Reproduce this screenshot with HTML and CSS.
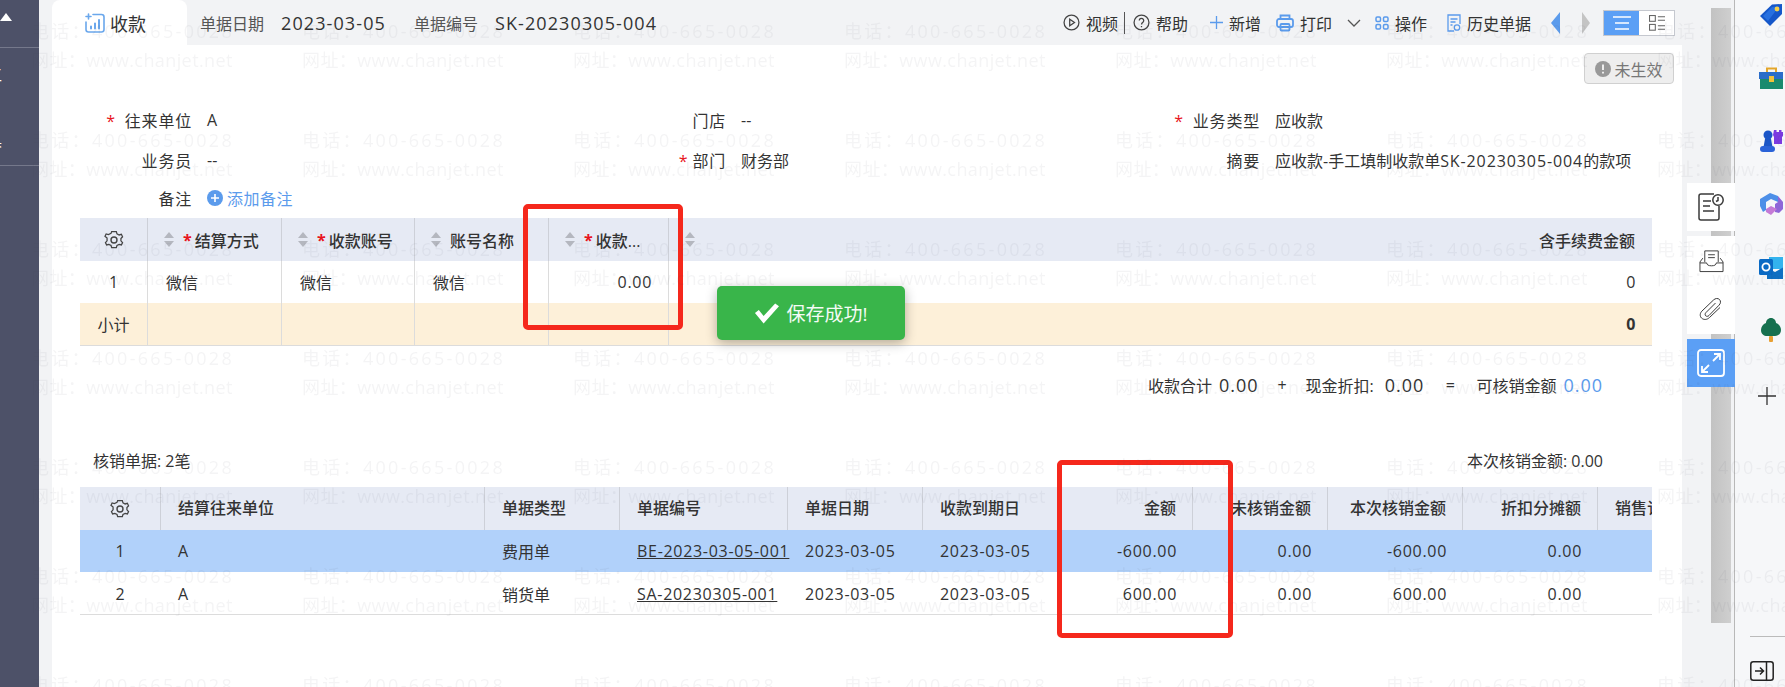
FILE: index.html
```html
<!DOCTYPE html>
<html lang="zh-CN">
<head>
    <meta charset="UTF-8">
    <title>收款</title>
    <link rel="stylesheet" href="styles.css">
</head>
<body>
    <aside class="sidebar">
        <div class="side-top"><span class="side-arrow"></span></div>
        <div class="side-menu">
            <span class="side-clip">工</span>
            <span class="side-clip">具</span>
        </div>
    </aside>

    <div class="work">
        <header class="topbar">
            <div class="tab">
                <svg class="tab-icon" viewBox="0 0 20 20" fill="none" stroke="#6aa7ec" stroke-width="1.6" stroke-linecap="round">
                    <path d="M8 1.5h8.5a2.5 2.5 0 0 1 2.5 2.5v12.5a2.5 2.5 0 0 1-2.5 2.5h-13A2.5 2.5 0 0 1 1 16.500V9"/>
                    <path d="M3.500 1v5M1 3.500h5"/>
                    <path d="M6 15.500v-2M10 15.500v-5M14 15.500V7" stroke-width="2"/>
                </svg>
                <span>收款</span>
            </div>
            <span class="head-label head-first">单据日期</span>
            <span class="head-value">2023-03-05</span>
            <span class="head-label head-second">单据编号</span>
            <span class="head-value">SK-20230305-004</span>

            <nav class="tools">
                <span class="tool">
                    <svg class="ico" viewBox="0 0 16 16" fill="none" stroke="#444" stroke-width="1.200"><circle cx="8" cy="8" r="7"/><path d="M6.300 5v6l4.500-3z"/></svg>视频
                </span>
                <span class="tool-sep"></span>
                <span class="tool tool-help">
                    <svg class="ico" viewBox="0 0 16 16" fill="none" stroke="#444" stroke-width="1.200"><circle cx="8" cy="8" r="7"/><path d="M5.900 6.200a2.100 2.100 0 1 1 3.300 1.700c-.8.5-1.200 1-1.200 1.900M8 11.300v1.100"/></svg>帮助
                </span>
                <span class="tool tool-new">
                    <svg class="ico ico-plus" viewBox="0 0 14 14" fill="none" stroke="#5b9bec" stroke-width="1.400"><path d="M7 0v14M0 7h14"/></svg>新增
                </span>
                <span class="tool">
                    <svg class="ico ico-print" viewBox="0 0 18 18" fill="none" stroke="#5b9bec" stroke-width="1.800"><path d="M4.500 5V1.500h9V5"/><rect x="1" y="5" width="16" height="8" rx="2"/><rect x="4.500" y="10" width="9" height="6.500" rx="1"/></svg>打印
                </span>
                <svg class="chevron" viewBox="0 0 14 8" fill="none" stroke="#555" stroke-width="1.300"><path d="M1 1l6 6 6-6"/></svg>
                <span class="tool">
                    <svg class="ico ico-ops" viewBox="0 0 14 14" fill="none" stroke="#5b9bec" stroke-width="1.500"><rect x="1" y="1" width="4.500" height="4.500" rx="1.200"/><rect x="8.500" y="1" width="4.500" height="4.500" rx="1.200"/><rect x="1" y="8.500" width="4.500" height="4.500" rx="1.200"/><rect x="8.500" y="8.500" width="4.500" height="4.500" rx="1.200"/></svg>操作
                </span>
                <span class="tool tool-history">
                    <svg class="ico ico-doc" viewBox="0 0 14 18" fill="none" stroke="#5b9bec" stroke-width="1.300"><path d="M7 17H1V1h12v9"/><path d="M3.500 5h7M3.500 8h5M3.500 11h2"/><circle cx="10" cy="13.500" r="2.700"/></svg>历史单据
                </span>
                <span class="tri tri-prev"></span>
                <span class="tri tri-next"></span>
                <div class="view-toggle">
                    <span class="view-btn view-on">
                        <svg viewBox="0 0 18 14" fill="none" stroke="#fff" stroke-width="1.500"><path d="M0 1h18M2 7h14M2 13h14"/></svg>
                    </span>
                    <span class="view-btn">
                        <svg viewBox="0 0 18 18" fill="none" stroke="#666" stroke-width="1.200"><rect x=".6" y=".6" width="6.500" height="6.500"/><rect x=".6" y="10.600" width="6.500" height="6.500"/><path d="M10 2h8M10 6h8M10 12h8M10 16h8"/></svg>
                    </span>
                </div>
            </nav>
        </header>

        <main class="sheet">
            <div class="status-row">
                <span class="status">
                    <svg class="status-ico" viewBox="0 0 16 16"><circle cx="8" cy="8" r="8" fill="#999"/><path d="M8 3.500v5.500M8 10.800v1.700" stroke="#eee" stroke-width="2"/></svg>未生效
                </span>
            </div>

            <section class="form">
                <label class="f-label"><i class="star">*</i>往来单位</label><span>A</span>
                <label class="f-label">门店</label><span>--</span>
                <label class="f-label"><i class="star">*</i>业务类型</label><span>应收款</span>

                <label class="f-label">业务员</label><span>--</span>
                <label class="f-label"><i class="star star-near">*</i>部门</label><span>财务部</span>
                <label class="f-label">摘要</label><span>应收款-手工填制收款单<span class="code">SK-20230305-004</span>的款项</span>

                <label class="f-label">备注</label>
                <span class="add-note">
                    <svg class="add-ico" viewBox="0 0 16 16"><circle cx="8" cy="8" r="8" fill="#5b9bec"/><path d="M8 4v8M4 8h8" stroke="#fff" stroke-width="1.600"/></svg>添加备注
                </span>
            </section>

            <table class="grid grid-pay">
                <colgroup>
                    <col class="c68"><col class="c134"><col class="c133"><col class="c134"><col class="c120"><col>
                </colgroup>
                <thead>
                    <tr>
                        <th class="center">
                            <svg class="gear" viewBox="0 0 20 20" fill="none" stroke="#444" stroke-width="1.400"><path d="M7.400 1.500h5.200l.7 2.500 2.400 1.300 2.500-.7 1.300 2.700-1.800 1.900v2.600l1.800 1.900-1.300 2.700-2.500-.7-2.400 1.300-.7 2.300H7.400l-.7-2.300-2.400-1.300-2.500.7-1.300-2.700 1.800-1.900V8.700L0 6.800l1.300-2.700 2.500.7L6.700 3.500z" transform="translate(1 .2) scale(.9)"/><circle cx="10" cy="10" r="3"/></svg>
                        </th>
                        <th><div class="th-in"><span class="sort"></span><i class="req">*</i>结算方式</div></th>
                        <th><div class="th-in"><span class="sort"></span><i class="req">*</i>收款账号</div></th>
                        <th><div class="th-in"><span class="sort"></span>账号名称</div></th>
                        <th><div class="th-in"><span class="sort"></span><i class="req">*</i>收款...</div></th>
                        <th><div class="th-in th-split"><span class="sort"></span>含手续费金额</div></th>
                    </tr>
                </thead>
                <tbody>
                    <tr>
                        <td class="center">1</td>
                        <td>微信</td>
                        <td>微信</td>
                        <td>微信</td>
                        <td class="right num">0.00</td>
                        <td class="right num">0</td>
                    </tr>
                    <tr class="subtotal">
                        <td class="center">小计</td>
                        <td></td>
                        <td></td>
                        <td></td>
                        <td></td>
                        <td class="right num"><b>0</b></td>
                    </tr>
                </tbody>
            </table>

            <div class="totals">
                <span>收款合计</span><span class="total-val">0.00</span>
                <span class="op">+</span>
                <span>现金折扣:</span><span class="total-val total-far">0.00</span>
                <span class="op op-wide">=</span>
                <span>可核销金额</span><span class="total-val blue">0.00</span>
            </div>

            <div class="bill-head">
                <span>核销单据: 2笔</span>
                <span>本次核销金额: 0.00</span>
            </div>

            <table class="grid grid-bill">
                <colgroup>
                    <col class="c81"><col class="c324"><col class="c135"><col class="c168"><col class="c135"><col class="c135"><col class="c135"><col class="c135"><col class="c135"><col class="c135"><col>
                </colgroup>
                <thead>
                    <tr>
                        <th class="center">
                            <svg class="gear" viewBox="0 0 20 20" fill="none" stroke="#444" stroke-width="1.400"><path d="M7.400 1.500h5.200l.7 2.500 2.400 1.300 2.500-.7 1.300 2.700-1.800 1.900v2.600l1.800 1.900-1.300 2.700-2.500-.7-2.400 1.300-.7 2.300H7.400l-.7-2.300-2.400-1.300-2.500.7-1.300-2.700 1.800-1.900V8.700L0 6.800l1.300-2.700 2.500.7L6.700 3.500z" transform="translate(1 .2) scale(.9)"/><circle cx="10" cy="10" r="3"/></svg>
                        </th>
                        <th>结算往来单位</th>
                        <th>单据类型</th>
                        <th>单据编号</th>
                        <th>单据日期</th>
                        <th>收款到期日</th>
                        <th class="right">金额</th>
                        <th class="right">未核销金额</th>
                        <th class="right">本次核销金额</th>
                        <th class="right">折扣分摊额</th>
                        <th class="clip">销售订单</th>
                    </tr>
                </thead>
                <tbody>
                    <tr class="picked">
                        <td class="center num">1</td>
                        <td>A</td>
                        <td>费用单</td>
                        <td class="num"><a class="doc-link">BE-2023-03-05-001</a></td>
                        <td class="num">2023-03-05</td>
                        <td class="num">2023-03-05</td>
                        <td class="right num">-600.00</td>
                        <td class="right num">0.00</td>
                        <td class="right num">-600.00</td>
                        <td class="right num">0.00</td>
                        <td></td>
                    </tr>
                    <tr>
                        <td class="center num">2</td>
                        <td>A</td>
                        <td>销货单</td>
                        <td class="num"><a class="doc-link">SA-20230305-001</a></td>
                        <td class="num">2023-03-05</td>
                        <td class="num">2023-03-05</td>
                        <td class="right num">600.00</td>
                        <td class="right num">0.00</td>
                        <td class="right num">600.00</td>
                        <td class="right num">0.00</td>
                        <td></td>
                    </tr>
                </tbody>
            </table>
        </main>
    </div>

    <div class="scroll"><div class="scroll-thumb"></div></div>

    <aside class="rail">
        <svg class="app" viewBox="0 0 24 24"><path d="M1 13L13 1.500 23 1v10L11 23z" fill="#1557c9"/><path d="M4 13L13 4l7-.5L9 18z" fill="#2f7bea" opacity=".7"/><circle cx="18" cy="6" r="2.400" fill="#f5d04a"/></svg>
        <svg class="app" viewBox="0 0 24 24"><path d="M8 7V2.500h9V7" fill="none" stroke="#e3a62a" stroke-width="2"/><rect y="6" width="25" height="7" fill="#2a6dc9"/><rect x="1" y="13" width="23" height="10" fill="#1a8a6e"/><rect x="10" y="10" width="5" height="6" fill="#f2c23a"/></svg>
        <svg class="app" viewBox="0 0 24 24"><path d="M15 1h2.500v2H20V1h2.500v2H25v3l-2 2v7h-8V8l-1-2z" fill="#7b3ae0"/><circle cx="9" cy="6" r="4.500" fill="#1a55c8"/><path d="M6 10h6l1.500 8H4.500z" fill="#1a55c8"/><rect x="1" y="17" width="15" height="6" rx="3" fill="#2a62d8"/></svg>
        <svg class="app" viewBox="0 0 24 24"><path d="M11 1l8 3v6l-7-3-5 3v8l-3 2-3-6V7z" fill="#4d8fe8"/><path d="M19 4l5 6v7l-4 4-4-1v-8l3-2z" fill="#8f66d8"/><path d="M7 17l5-3 6 3-6 6-5-3z" fill="#c47ad6"/></svg>
        <svg class="app" viewBox="0 0 24 24"><rect x="10" y="2" width="14" height="12" fill="#33b3ee"/><path d="M8 13l8 4 9-5v12H8z" fill="#0f6fc2"/><rect y="4" width="14" height="16" rx="1.500" fill="#0a6ac4"/><circle cx="7" cy="12" r="3.600" fill="none" stroke="#fff" stroke-width="1.800"/></svg>
        <svg class="app" viewBox="0 0 24 24"><path d="M12 0c3 0 5 2.500 5 5 3 1 5 4 5 7 0 4-3 6-6 6H8c-3 0-6-2-6-6 0-3 2-6 5-7 0-2.500 2-5 5-5z" fill="#16704f"/><rect x="10" y="18" width="4" height="6" rx="1" fill="#e8a033"/></svg>
        <svg class="rail-plus" viewBox="0 0 18 18" fill="none" stroke="#333" stroke-width="1.300"><path d="M9 0v18M0 9h18"/></svg>
        <div class="rail-bottom">
            <div class="rail-line"></div>
            <svg class="rail-exit" viewBox="0 0 24 20" fill="none" stroke="#222" stroke-width="1.500"><rect x=".8" y=".8" width="22.400" height="18.400" rx="2.500"/><path d="M16.500 1v18"/><path d="M5 10h8M10 6.500L13.500 10 10 13.500"/></svg>
        </div>
    </aside>

    <div class="float-tools">
        <div class="float-item float-one">
            <svg viewBox="0 0 26 28" fill="none" stroke="#3a3a3a" stroke-width="1.500"><path d="M21 13v12a2 2 0 0 1-2 2H3a2 2 0 0 1-2-2V3a2 2 0 0 1 2-2h13"/><path d="M5 8h8M5 13h7M5 18h11" stroke-width="1.700"/><circle cx="20" cy="7" r="5.200"/><path d="M20 4v3.500l-2 1"/></svg>
        </div>
        <div class="float-item float-two">
            <svg viewBox="0 0 26 24" fill="none" stroke="#3a3a3a" stroke-width="1"><path d="M6 13V1.500h14V13"/><path d="M9.500 5.500h7M9.500 8.500h7"/><path d="M1 23V13l3-4M25 23V13l-3-4M1 23h24M1 14h7c0 2 2 3 5 3s5-1 5-3h7"/></svg>
            <svg viewBox="0 0 24 24" fill="none" stroke="#3a3a3a" stroke-width="1"><path d="M20.500 10.500L10 20.500c-2.500 2.500-6 2.500-8 .5s-1.500-5 .5-7L14 3c1.800-1.800 4.500-2 6-.5s1.300 4-.5 5.700L9.500 18.500c-1 1-2.400 1.100-3.300.3s-.7-2.300.3-3.300l9.500-9.500"/></svg>
        </div>
        <div class="float-item float-blue">
            <svg viewBox="0 0 28 28" fill="none" stroke="#fff" stroke-width="1.800"><rect x="1" y="1" width="26" height="26" rx="3"/><path d="M16 12l7-7M17 5h6v6M12 16l-7 7M5 17v6h6"/></svg>
        </div>
    </div>

    <div class="toast">
        <svg class="toast-check" viewBox="0 0 26 22"><path d="M1 11l4-3 5 6L22 1l4 3L10 22z" fill="#fff"/></svg>
        <span>保存成功!</span>
    </div>

    <div class="mark-box mark-pay"></div>
    <div class="mark-box mark-amount"></div>

    <svg class="watermark" width="1785" height="687">
        <defs>
            <pattern id="wm" width="271" height="109" patternUnits="userSpaceOnUse">
                <text class="wm-tel" x="31" y="38">电话：400-665-0028</text>
                <text class="wm-web" x="31" y="67">网址：www.chanjet.net</text>
            </pattern>
        </defs>
        <rect width="1785" height="687" fill="url(#wm)"/>
    </svg>
</body>
</html>
```

FILE: styles.css
```css
* {
    box-sizing: border-box;
}
html, body {
    margin: 0;
    height: 100%;
}
body {
    display: flex;
    width: 1785px;
    height: 687px;
    overflow: hidden;
    position: relative;
    font-family: 'Open Sans', 'Noto Sans CJK SC', sans-serif;
    font-size: 16px;
    color: #333;
    background-color: #f2f3f5;
}
i {
    font-style: normal;
}
svg {
    display: block;
    flex: none;
}

/* left nav */
.sidebar {
    width: 39px;
    flex: none;
    background-color: #4d5168;
    overflow: hidden;
}
.side-top {
    height: 48px;
    padding-top: 13px;
    border-bottom: 1px solid #75788b;
}
.side-arrow {
    display: block;
    width: 0;
    border-left: 6px solid transparent;
    border-right: 6px solid transparent;
    border-bottom: 8px solid #fff;
}
.side-menu {
    height: 118px;
    border-bottom: 1px solid #75788b;
    display: flex;
    flex-direction: column;
    gap: 43px;
    padding-top: 16px;
}
.side-clip {
    color: #fff;
    margin-left: -14px;
    line-height: 22px;
}

/* top bar */
.work {
    width: 1672px;
    flex: none;
    padding-left: 13px;
}
.topbar {
    height: 45px;
    display: flex;
    align-items: center;
    padding-right: 36px;
}
.tab {
    width: 135px;
    height: 45px;
    padding-left: 33px;
    display: flex;
    align-items: center;
    gap: 5px;
    background-color: #fff;
    border-radius: 8px 8px 0 0;
    font-size: 18px;
}
.tab-icon {
    width: 20px;
    height: 20px;
}
.head-label {
    color: #555;
}
.head-first {
    margin-left: 13px;
}
.head-second {
    margin-left: 28px;
}
.head-value {
    margin-left: 17px;
    font-size: 18px;
    letter-spacing: 1.1px;
}
.tools {
    margin-left: auto;
    display: flex;
    align-items: center;
    gap: 17px;
}
.tool {
    display: flex;
    align-items: center;
    gap: 6px;
}
.ico {
    width: 17px;
    height: 17px;
}
.ico-plus {
    width: 13px;
    height: 13px;
}
.ico-print {
    width: 18px;
    height: 18px;
}
.ico-ops {
    width: 14px;
    height: 14px;
}
.ico-doc {
    width: 14px;
    height: 18px;
}
.tool-sep {
    width: 1px;
    height: 22px;
    background-color: #555;
    margin: 0 -9px 0 -11px;
}
.tool-help {
    margin-right: 5px;
}
.tool-new {
    margin-right: -2px;
}
.tool-history {
    margin-left: 3px;
}
.chevron {
    width: 14px;
    height: 8px;
    margin: 0 -3px 0 -2px;
}
.tri {
    width: 0;
    border-top: 11px solid transparent;
    border-bottom: 11px solid transparent;
}
.tri-prev {
    border-right: 9px solid #5b9bec;
    margin-left: 3px;
}
.tri-next {
    border-left: 8px solid #c4c4c4;
    margin-left: 5px;
}
.view-toggle {
    display: flex;
    width: 72px;
    height: 26px;
    margin-left: -4px;
    border: 1px solid #c5c8cf;
    background-color: #fff;
}
.view-btn {
    flex: 1;
    display: flex;
    align-items: center;
    justify-content: center;
}
.view-btn svg {
    width: 18px;
    height: 16px;
}
.view-on {
    background-color: #5b9ff5;
}

/* bill sheet */
.sheet {
    width: 1630px;
    height: 642px;
    padding: 8px 8px 0 28px;
    background-color: #fff;
}
.status-row {
    display: flex;
    justify-content: flex-end;
    height: 31px;
}
.status {
    width: 90px;
    display: flex;
    align-items: center;
    justify-content: center;
    gap: 3px;
    background-color: #eeeeee;
    border: 1px solid #d0d0d0;
    border-radius: 4px;
    color: #777;
}
.status-ico {
    width: 16px;
    height: 16px;
}
.form {
    display: grid;
    grid-template-columns: 112px 379px 125px 379px 125px 1fr;
    grid-template-rows: 40px 39px 37px;
    column-gap: 15px;
    align-items: center;
    margin: 16px 0 2px;
}
.f-label {
    text-align: right;
    letter-spacing: .8px;
}
.star {
    color: #e8141c;
    margin-right: 9px;
}
.star-near {
    margin-right: 4px;
}
.code {
    letter-spacing: .9px;
}
.add-note {
    display: flex;
    align-items: center;
    gap: 4px;
    color: #5b9bec;
    letter-spacing: .5px;
}
.add-ico {
    width: 16px;
    height: 16px;
}

/* tables */
.grid {
    border-collapse: separate;
    border-spacing: 0;
    table-layout: fixed;
    width: 1572px;
}
.c68 { width: 68px; }
.c81 { width: 81px; }
.c120 { width: 120px; }
.c133 { width: 133px; }
.c134 { width: 134px; }
.c135 { width: 135px; }
.c168 { width: 168px; }
.c324 { width: 324px; }
.grid th {
    height: 43px;
    padding: 0 16px;
    background-color: #e6eaf4;
    border-right: 1px solid #cdd0d8;
    text-align: left;
    font-weight: 500;
    white-space: nowrap;
}
.grid th:last-child,
.grid td:last-child {
    border-right: 0;
}
.grid td {
    height: 42px;
    padding: 0 16px;
    white-space: nowrap;
}
.grid .center {
    text-align: center;
    padding: 0;
}
.grid .right {
    text-align: right;
}
.gear {
    width: 20px;
    height: 20px;
    margin: 0 auto;
}
.grid-pay td {
    border-right: 1px solid #dcdcdc;
    padding-left: 18px;
}
.grid-pay .subtotal td {
    height: 43px;
    background-color: #fdf0d9;
    border-bottom: 1px solid #dcdcdc;
}
.th-in {
    display: flex;
    align-items: center;
}
.th-split {
    justify-content: space-between;
    padding-right: 1px;
}
.sort {
    display: flex;
    flex-direction: column;
    gap: 3px;
    margin-right: 9px;
    flex: none;
}
.sort::before,
.sort::after {
    content: "";
    width: 0;
    border-left: 5px solid transparent;
    border-right: 5px solid transparent;
}
.sort::before {
    border-bottom: 6px solid #b4b7bf;
}
.sort::after {
    border-top: 6px solid #b4b7bf;
}
.req {
    color: #e8141c;
    margin-right: 3px;
    font-weight: 700;
}
.num {
    letter-spacing: .7px;
}
.clip {
    overflow: hidden;
}
.grid-bill th {
    padding: 0 16px 4px 17px;
}
.grid-bill td {
    padding-left: 17px;
}
.grid-bill tbody tr:last-child td {
    border-bottom: 1px solid #dcdcdc;
    height: 43px;
    padding-top: 2px;
}
.picked td {
    background-color: #b1d1fa;
}
.doc-link {
    text-decoration: underline;
}

.totals {
    display: flex;
    align-items: center;
    justify-content: flex-end;
    height: 30px;
    margin-top: 24px;
    padding-right: 71px;
}
.total-val {
    font-size: 18px;
    letter-spacing: 1px;
    margin-left: 7px;
}
.total-far {
    margin-left: 11px;
}
.op {
    width: 47px;
    text-align: center;
}
.op-wide {
    width: 52px;
}
.blue {
    color: #5b9bec;
}
.bill-head {
    display: flex;
    justify-content: space-between;
    align-items: center;
    height: 24px;
    margin-top: 48px;
    margin-bottom: 15px;
    padding: 0 71px 0 13px;
}

.scroll {
    width: 24px;
    flex: none;
    padding: 8px 3px 0 0;
    border-right: 1px solid #b8b8b8;
}
.scroll-thumb {
    height: 615px;
    background: linear-gradient(to right, #c2c2c2, #cfcfcf);
}

/* right app rail */
.rail {
    flex: 1;
    background-color: #f6f7f9;
    padding: 3px 0 0 24px;
    display: flex;
    flex-direction: column;
    gap: 39px;
    position: relative;
}
.app {
    width: 24px;
    height: 24px;
}
.rail-plus {
    width: 18px;
    height: 18px;
    margin: 6px 0 0 -1px;
}
.rail-bottom {
    margin: 192px 0 0 -9px;
}
.rail-line {
    height: 1px;
    background-color: #bbb;
    margin-bottom: 24px;
}
.rail-exit {
    width: 24px;
    height: 20px;
}

/* overlays */
.float-tools {
    position: absolute;
    left: 1687px;
    top: 183px;
    width: 48px;
    display: flex;
    flex-direction: column;
    gap: 5px;
}
.float-item {
    display: flex;
    flex-direction: column;
    align-items: center;
    justify-content: center;
    background-color: #fff;
}
.float-one {
    height: 48px;
}
.float-one svg {
    width: 26px;
    height: 28px;
}
.float-two {
    height: 98px;
    gap: 24px;
}
.float-two svg {
    width: 25px;
    height: 24px;
}
.float-blue {
    height: 48px;
    background-color: #5b9ff5;
}
.float-blue svg {
    width: 28px;
    height: 28px;
}
.toast {
    position: absolute;
    left: 717px;
    top: 286px;
    width: 188px;
    height: 54px;
    display: flex;
    align-items: center;
    justify-content: center;
    gap: 7px;
    background-color: #39b54a;
    border-radius: 5px;
    box-shadow: 0 3px 12px rgba(0, 0, 0, 0.3);
    color: #f4fbf5;
    font-size: 19px;
}
.toast-check {
    width: 25px;
    height: 22px;
}
.mark-box {
    position: absolute;
    border: 5px solid #f5281c;
    border-radius: 5px;
}
.mark-pay {
    left: 523px;
    top: 204px;
    width: 160px;
    height: 126px;
}
.mark-amount {
    left: 1057px;
    top: 460px;
    width: 176px;
    height: 178px;
}
.watermark {
    position: absolute;
    left: 0;
    top: 0;
    pointer-events: none;
}
.watermark text {
    font-size: 18px;
    fill: rgba(50, 60, 80, 0.055);
}
.wm-tel {
    letter-spacing: 2.3px;
}
.wm-web {
    letter-spacing: .4px;
}
```
